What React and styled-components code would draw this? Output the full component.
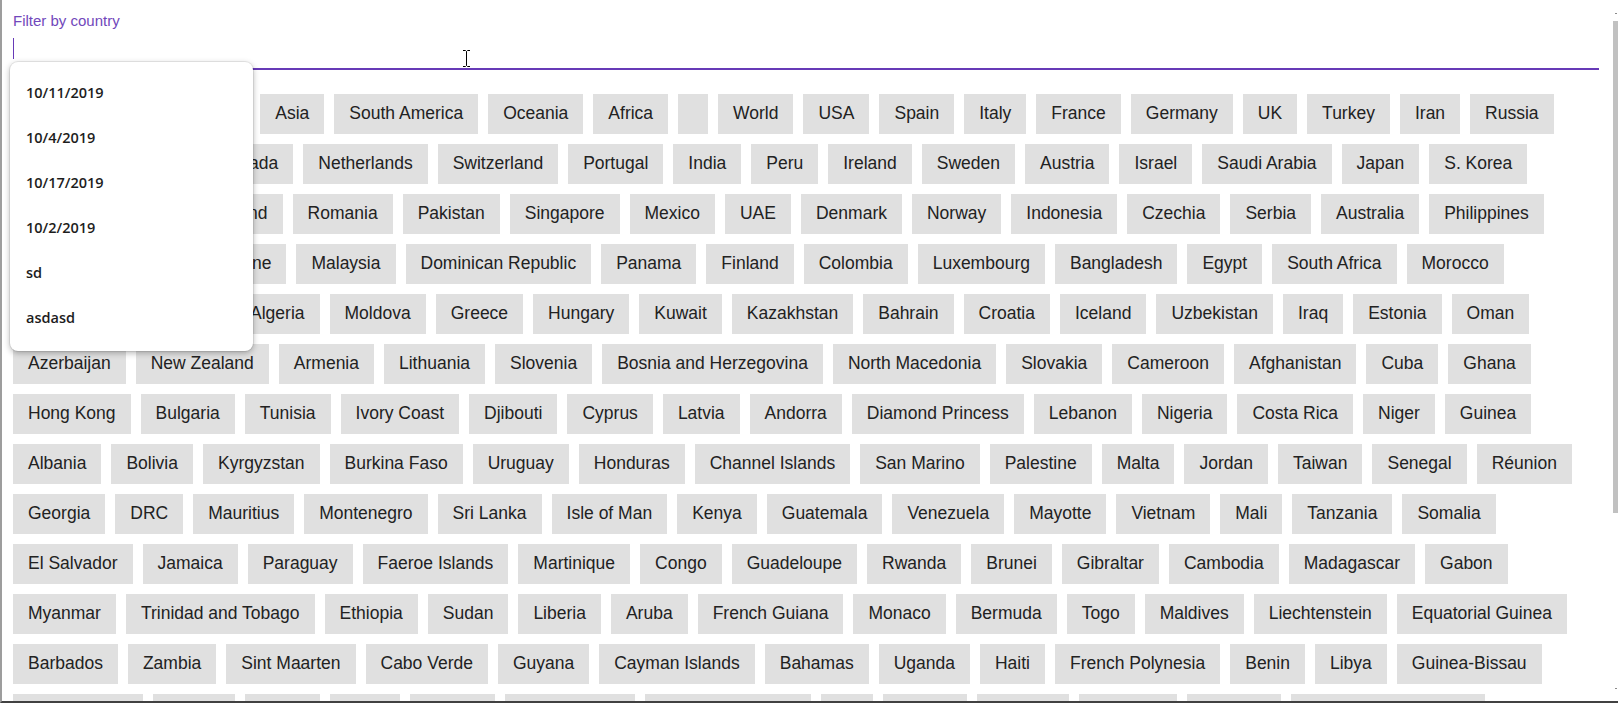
import React from "react";
import styled, { createGlobalStyle } from "styled-components";

const GlobalStyle = createGlobalStyle`
  html, body { margin: 0; padding: 0; background: #ffffff; overflow: hidden; }
  * { box-sizing: border-box; }
`;

const PURPLE = "#673ab7";

const Frame = styled.div`
  position: relative;
  width: 1618px;
  height: 703px;
  overflow: hidden;
  background: #ffffff;
  border-left: 2px solid #9d9d9d;
  border-bottom: 2px solid #414141;
`;

const Page = styled.main`
  padding: 0 19px 0 11px;
  display: flex;
  flex-direction: column;
`;

const FilterField = styled.div`
  position: relative;
  padding-top: 13px;
  display: flex;
  flex-direction: column;
`;

const FieldLabel = styled.label`
  display: block;
  font-family: "Liberation Sans", Arial, sans-serif;
  font-size: 15px;
  line-height: 15px;
  color: #7148bb;
`;

const InputRow = styled.div`
  position: relative;
  height: 42px;
  border-bottom: 2px solid ${PURPLE};
`;

const Input = styled.input`
  width: 100%;
  height: 100%;
  border: 0;
  outline: none;
  background: transparent;
  padding: 0;
  font-family: "Liberation Sans", Arial, sans-serif;
  font-size: 17.5px;
  caret-color: transparent;
`;

const Caret = styled.span`
  position: absolute;
  left: 0;
  top: 10px;
  width: 1px;
  height: 21px;
  background: ${PURPLE};
`;

const Suggestions = styled.ul`
  position: absolute;
  left: -3px;
  top: 62px;
  width: 243px;
  margin: 0;
  padding: 8px 0 11px;
  list-style: none;
  background: #ffffff;
  border-radius: 8px;
  box-shadow: 0 0 0 1px rgba(0, 0, 0, 0.07), 0 2px 6px rgba(0, 0, 0, 0.3);
  z-index: 5;
`;

const Suggestion = styled.li`
  height: 45px;
  display: flex;
  align-items: center;
  padding-left: 16px;
  font-family: "Open Sans", "Noto Sans", sans-serif;
  font-size: 14.5px;
  font-weight: 600;
  color: #1d1d1d;
`;

const TagList = styled.div`
  margin-top: 24px;
  display: flex;
  flex-wrap: wrap;
  gap: 10px;
`;

const Tag = styled.button`
  height: 40px;
  padding: 0 15px 1px;
  border: 0;
  border-radius: 0;
  background: #e0e0e0;
  color: #222222;
  font-family: "Liberation Sans", Arial, sans-serif;
  font-size: 17.5px;
  line-height: 1;
  display: inline-flex;
  align-items: center;
  white-space: nowrap;
  cursor: pointer;
`;

const ScrollThumb = styled.div`
  position: absolute;
  right: 0;
  top: 21px;
  width: 5px;
  height: 492px;
  background: #c1c1c1;
`;

const ScrollArrow = styled.div`
  position: absolute;
  right: 1px;
  top: ${(p) => p.$top}px;
  width: 2px;
  height: 1px;
  background: #8a8a8a;
`;

const MousePointer = styled.svg`
  position: absolute;
  left: 460px;
  top: 49px;
  pointer-events: none;
`;

const suggestions = ["10/11/2019", "10/4/2019", "10/17/2019", "10/2/2019", "sd", "asdasd"];

const countries = [
  "Europe", "North America", "Asia", "South America", "Oceania", "Africa", "", "World", "USA", "Spain", "Italy", "France", "Germany", "UK", "Turkey", "Iran", "Russia",
  "China", "Belgium", "Canada", "Netherlands", "Switzerland", "Portugal", "India", "Peru", "Ireland", "Sweden", "Austria", "Israel", "Saudi Arabia", "Japan", "S. Korea",
  "Chile", "Ecuador", "Poland", "Romania", "Pakistan", "Singapore", "Mexico", "UAE", "Denmark", "Norway", "Indonesia", "Czechia", "Serbia", "Australia", "Philippines",
  "Qatar", "Belarus", "Ukraine", "Malaysia", "Dominican Republic", "Panama", "Finland", "Colombia", "Luxembourg", "Bangladesh", "Egypt", "South Africa", "Morocco",
  "Thailand", "Argentina", "Algeria", "Moldova", "Greece", "Hungary", "Kuwait", "Kazakhstan", "Bahrain", "Croatia", "Iceland", "Uzbekistan", "Iraq", "Estonia", "Oman",
  "Azerbaijan", "New Zealand", "Armenia", "Lithuania", "Slovenia", "Bosnia and Herzegovina", "North Macedonia", "Slovakia", "Cameroon", "Afghanistan", "Cuba", "Ghana",
  "Hong Kong", "Bulgaria", "Tunisia", "Ivory Coast", "Djibouti", "Cyprus", "Latvia", "Andorra", "Diamond Princess", "Lebanon", "Nigeria", "Costa Rica", "Niger", "Guinea",
  "Albania", "Bolivia", "Kyrgyzstan", "Burkina Faso", "Uruguay", "Honduras", "Channel Islands", "San Marino", "Palestine", "Malta", "Jordan", "Taiwan", "Senegal", "Réunion",
  "Georgia", "DRC", "Mauritius", "Montenegro", "Sri Lanka", "Isle of Man", "Kenya", "Guatemala", "Venezuela", "Mayotte", "Vietnam", "Mali", "Tanzania", "Somalia",
  "El Salvador", "Jamaica", "Paraguay", "Faeroe Islands", "Martinique", "Congo", "Guadeloupe", "Rwanda", "Brunei", "Gibraltar", "Cambodia", "Madagascar", "Gabon",
  "Myanmar", "Trinidad and Tobago", "Ethiopia", "Sudan", "Liberia", "Aruba", "French Guiana", "Monaco", "Bermuda", "Togo", "Maldives", "Liechtenstein", "Equatorial Guinea",
  "Barbados", "Zambia", "Sint Maarten", "Cabo Verde", "Guyana", "Cayman Islands", "Bahamas", "Uganda", "Haiti", "French Polynesia", "Benin", "Libya", "Guinea-Bissau",
  "Mozambique", "Eritrea", "Nepal", "Syria", "Angola", "Sierra Leone", "Turks and Caicos", "Fiji", "Malawi", "Gambia", "Grenada", "Namibia", "Antigua and Barbuda",
  "Papua New Guinea", "Caribbean Netherlands", "Saint Martin", "Mongolia", "Zimbabwe", "Botswana", "Belize", "Dominica", "Saint Lucia", "Curaçao", "Laos", "Burundi",
];

export default function App() {
  return (
    <>
      <GlobalStyle />
      <Frame>
        <Page>
          <FilterField>
            <FieldLabel htmlFor="country-filter">Filter by country</FieldLabel>
            <InputRow>
              <Input id="country-filter" list="country-history" readOnly />
              <Caret />
            </InputRow>
            <Suggestions>
              {suggestions.map((s) => (
                <Suggestion key={s}>{s}</Suggestion>
              ))}
            </Suggestions>
          </FilterField>
          <TagList>
            {countries.map((c, i) => (
              <Tag key={i}>{c}</Tag>
            ))}
          </TagList>
        </Page>
        <MousePointer width="9" height="19" viewBox="0 0 9 19">
          <path d="M1 1.5h2.5l1 1 1-1H8M4.5 2.5v14M1 17.5h2.5l1-1 1 1H8" fill="none" stroke="#ffffff" strokeWidth="2.4" />
          <path d="M1 1.5h2.5l1 1 1-1H8M4.5 2.5v14M1 17.5h2.5l1-1 1 1H8" fill="none" stroke="#000000" strokeWidth="1" />
        </MousePointer>
        <ScrollArrow $top={13} />
        <ScrollThumb />
        <ScrollArrow $top={688} />
      </Frame>
    </>
  );
}
